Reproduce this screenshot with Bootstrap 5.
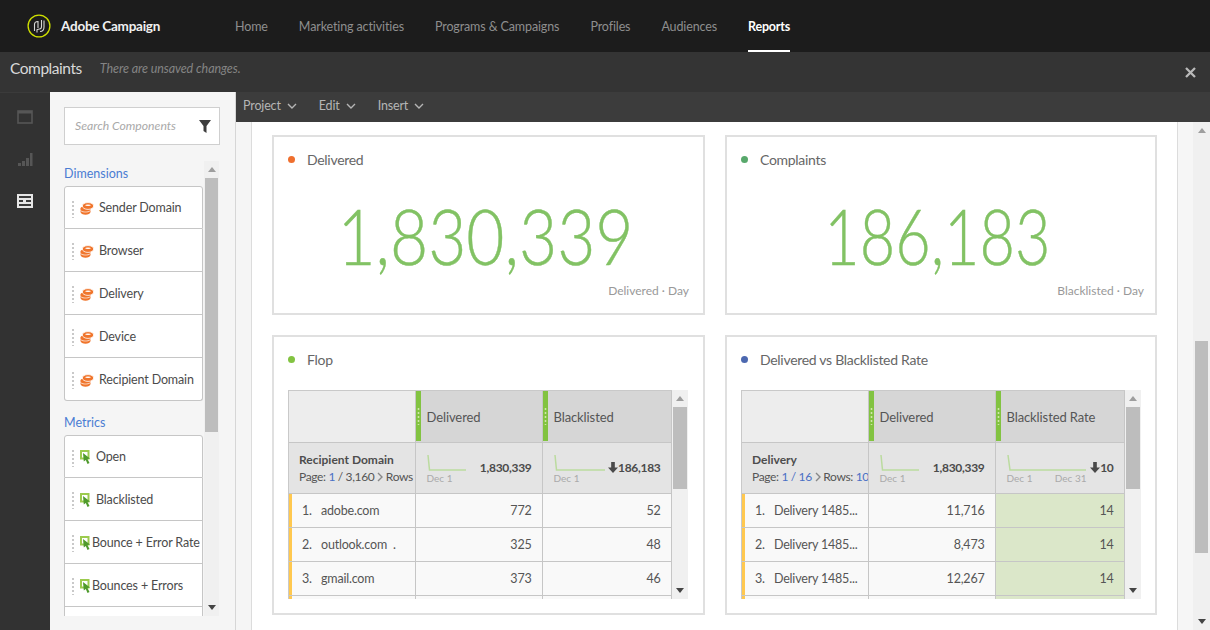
<!DOCTYPE html>
<html lang="en">
<head>
<meta charset="utf-8">
<title>Adobe Campaign - Complaints</title>
<link href="https://cdn.jsdelivr.net/npm/bootstrap@5.3.0/dist/css/bootstrap.min.css" rel="stylesheet">
<style>
html,body{height:630px;overflow:hidden}
body{font-family:Lato,"Liberation Sans",sans-serif;font-size:13px;color:#4b4b4b;background:#fff}
.app-shell{width:1210px;height:630px}
.top-bar{height:52px;background:#1c1c1c;padding:0}
.brand-box{width:235px;padding-left:27px;gap:10px;color:#f0f0f0;font-weight:700;font-size:13.5px;letter-spacing:-.25px}
.top-bar .nav-link{color:#8e8e8e;font-size:12.5px;letter-spacing:-.12px;padding:0;margin-right:31px;height:52px;line-height:53px;border-bottom:2px solid transparent}
.top-bar .nav-link.active{color:#fff;font-weight:700;border-bottom-color:#fff;margin-right:0;letter-spacing:-.2px}
.title-bar{height:40px;background:#343434;padding:0 13px 0 10px}
.title-main{font-size:15.5px;letter-spacing:-.45px;color:#d9d9d9;margin-right:18px;margin-bottom:6px}
.title-note{font-size:12.5px;font-style:italic;color:#848484;margin-bottom:6px;letter-spacing:-.08px}
.work-area{height:538px}
.rail{width:50px;background:#323232;padding-top:17px;gap:27px;border-top:1px solid #3b3b3b}
.side-panel{width:186px;background:#f5f5f5;border-right:1px solid #d6d6d6;padding:15px 0 0 14px}
.search-box{width:156px;height:38px;background:#fff;border:1px solid #cfcfcf;padding:0 8px 0 10px;font-size:12.2px;font-style:italic;color:#a9a9a9}
.panel-scroll{width:155px;height:455px;margin-top:16px;overflow:hidden}
.panel-lists{width:140px;height:455px;overflow:hidden}
.panel-head{color:#4a7cd3;font-size:12.5px;line-height:15px;padding:5px 0 5px}
.panel-head.second{padding-top:14px}
.comp-list{border-radius:3px;width:139px;--bs-list-group-border-color:#c6c6c6;--bs-list-group-border-radius:3px}
.comp-list .list-group-item{height:43px;padding:2px 0 0 7px;color:#4b4b4b;font-size:12.5px;letter-spacing:-.15px;white-space:nowrap;display:flex;align-items:center}
.grip-col{width:2px;height:18px;margin-right:6px;background:radial-gradient(circle,#c9c9c9 0.9px,transparent 1.1px) 0 0/2px 4px repeat-y}
.txt-gap{margin-left:5px}
.txt-tight{margin-left:1px}
.vscroll{width:15px;background:#f0f0f0;flex:none;padding:0 1px}
.thumb-a{height:254px;margin-top:17px;background:#bdbdbd}
.arrow-up,.arrow-dn{position:absolute;left:50%;margin-left:-4px;width:0;height:0;border-left:4px solid transparent;border-right:4px solid transparent}
.arrow-up{top:6px;border-bottom:5px solid #9e9e9e}
.arrow-dn{bottom:6px;border-top:5px solid #444}
.right-zone{background:#fff;min-width:0}
.tool-bar{height:30px;background:#3c3c3c;padding-left:7px;padding-bottom:2px;color:#b5b5b5;font-size:12.5px;letter-spacing:-.15px}
.tool-item{gap:6px;margin-right:22px}
.content-wrap{height:508px}
.gutter-a{width:16px;background:#f5f5f5;border-right:1px solid #dcdcdc}
.canvas-main{width:925px;padding:13px 20px 0 20px;background:#fff;overflow:hidden}
.gutter-b{width:16px;background:#f6f6f6;border-left:1px solid #dcdcdc}
.page-scroll{width:17px;background:#f0f0f0}
.thumb-b{position:absolute;left:2px;right:2px;top:219px;height:212px;background:#bdbdbd}
.dash-grid{display:grid;grid-template-columns:433px 432px;grid-template-rows:180px 280px;gap:20px}
.dash-card{border:2px solid #e0e0e0;border-radius:0;padding:0 14px 0 14px;overflow:hidden;--bs-card-bg:#fff}
.card-line{height:44px;padding-top:1px;font-size:14px;letter-spacing:-.3px;color:#666;gap:12px}
.dot-mark{width:7px;height:7px;border-radius:50%;flex:none}
.big-num{font-weight:300;font-size:76px;line-height:80px;color:#82c264;-webkit-text-stroke:.4px #82c264;text-align:center;margin-top:15px;padding-right:7px;transform:scaleX(.866)}
.big-num.num-short{padding-right:9px;transform:scaleX(.805)}
.big-sub{font-size:12px;color:#999;text-align:right;line-height:16px;margin-top:7px}
.sub-wide{margin-right:-3px}
.tbl-line{height:209px;margin-top:9px}
.tbl-clip{width:384px;height:209px;overflow:hidden;border-top:1px solid #c9c9c9;border-left:1px solid #c9c9c9}
.data-tbl{table-layout:fixed;width:382px;border-collapse:collapse;margin:0;font-size:12.5px;letter-spacing:-.2px}
.data-tbl td,.data-tbl th{padding:0;border:1px solid #c6c6c6;border-top:0;overflow:hidden}
.data-tbl td:first-child,.data-tbl th:first-child{border-left:0}
.row-h{height:51px}
.row-s{height:51px}
.row-d{height:34px}
.corner{background:#ededed}
.col-head{background:#d6d6d6;border-left:0!important;font-weight:400;padding-left:0!important}
.col-head>div{height:100%;align-items:center;gap:6px;font-size:13px;letter-spacing:-.1px;color:#555}
.col-head .head-txt{padding-top:2px}
.green-grip{width:5px;height:50px;background:#82c341;flex:none;display:flex;align-items:center;justify-content:center}
.green-grip::before{content:"";width:3px;height:18px;background:radial-gradient(circle,#cfe7a8 .9px,transparent 1.2px) 0 0/3px 4px repeat-y}
.sum-row td{background:#e4e4e4}
.sum-left{padding:0 0 0 10px!important;line-height:17px;font-size:12px;white-space:nowrap;color:#555;letter-spacing:-.35px}
.sum-left b{color:#4d4d4d;display:block;letter-spacing:0}
.blue-t{color:#4a6fc4}
.sum-val{padding:0 10px 0 11px!important;font-weight:700;font-size:12px;letter-spacing:-.3px;color:#4b4b4b}
.spark-lab{font-size:10px;color:#aaa;line-height:10px;font-weight:400;letter-spacing:0}
.data-row td{background:#f9f9f9;color:#555;padding-top:2px}
.data-row td.lab-cell{box-shadow:inset 3px 0 0 #ffc84f;padding-left:13px;white-space:nowrap}
.rank-t{display:inline-block;width:19px}
.data-row td.num-cell{text-align:right;padding-right:10px}
.data-row td.heat{background:#dbe7c9}
.tbl-bar{width:16px;height:209px;background:#f0f0f0;margin-left:0;padding:0 1px}
.thumb-c{height:82px;margin-top:17px;background:#bdbdbd}
</style>
</head>
<body>
<svg width="0" height="0" class="position-absolute">
  <symbol id="ico-stack" viewBox="0 0 14 13">
    <path d="M.5 6.500C.5 5 3 4 5.500 4S10.500 5 10.500 6.500V10C10.500 11.600 8 12.800 5.500 12.800S.5 11.600 .5 10Z" fill="#f0752c"/>
    <path d="M.5 8.500C2 9.900 4 10 5.500 10S9 9.900 10.500 8.500" fill="none" stroke="#fff" stroke-width=".7"/>
    <ellipse cx="8" cy="4" rx="5.700" ry="3.400" fill="#f0752c" stroke="#fff" stroke-width=".8"/>
    <ellipse cx="8" cy="3.300" rx="2.800" ry=".8" fill="#fff"/>
  </symbol>
  <symbol id="ico-metric" viewBox="0 0 11 15">
    <path d="M0 0H9.500V9.500H0Z M2 2V7.500H7.500V2Z" fill-rule="evenodd" fill="#9ccb4e"/>
    <path d="M3 3L10 8.500 7.500 9 9.500 13 7.500 14 5.800 10 3.800 11.500Z" fill="#4f9a2c"/>
  </symbol>
  <symbol id="ico-chev" viewBox="0 0 10 6">
    <path d="M1 1L5 5 9 1" fill="none" stroke="#b5b5b5" stroke-width="1.400"/>
  </symbol>
  <symbol id="ico-down" viewBox="0 0 11 12">
    <path d="M3.500 0H7.500V6H11L5.500 12 0 6H3.500Z" fill="#4a4a4a"/>
  </symbol>
  <symbol id="ico-next" viewBox="0 0 6 10">
    <path d="M1 1L5 5 1 9" fill="none" stroke="#888" stroke-width="1.400"/>
  </symbol>
</svg>

<div class="app-shell d-flex flex-column">
  <nav class="navbar top-bar flex-nowrap">
    <div class="brand-box d-flex align-items-center">
      <svg width="24" height="24" viewBox="0 0 24 24" aria-hidden="true">
        <circle cx="12" cy="12" r="10.900" fill="none" stroke="#cfe000" stroke-width="1.300"/>
        <path d="M7.500 17V10.500C7.500 8.500 9 7.500 11 7.500V14M10 18.500V16C10 15 11 15 12.500 15 14 15 14.500 14 14.500 12.500V6M17 6.500V13C17 16 15.500 17.500 13 17.500" fill="none" stroke="#d8d8d8" stroke-width="1.100"/>
      </svg>
      <span>Adobe Campaign</span>
    </div>
    <ul class="nav flex-grow-1 flex-nowrap">
      <li class="nav-item"><a class="nav-link" href="#">Home</a></li>
      <li class="nav-item"><a class="nav-link" href="#">Marketing activities</a></li>
      <li class="nav-item"><a class="nav-link" href="#">Programs &amp; Campaigns</a></li>
      <li class="nav-item"><a class="nav-link" href="#">Profiles</a></li>
      <li class="nav-item"><a class="nav-link" href="#">Audiences</a></li>
      <li class="nav-item"><a class="nav-link active" href="#">Reports</a></li>
    </ul>
  </nav>

  <div class="title-bar d-flex align-items-center">
    <span class="title-main">Complaints</span>
    <span class="title-note">There are unsaved changes.</span>
    <svg class="ms-auto" width="13" height="13" viewBox="0 0 13 13" aria-label="Close"><path d="M2 2L11 11M11 2L2 11" stroke="#b9b9b9" stroke-width="2.300"/></svg>
  </div>

  <div class="work-area d-flex">
    <div class="rail d-flex flex-column align-items-center">
      <svg width="16" height="14" viewBox="0 0 16 14"><rect x="1" y="1" width="14" height="12" fill="none" stroke="#565656" stroke-width="1.600"/><rect x="1" y="1" width="14" height="2.500" fill="#565656"/></svg>
      <svg width="16" height="16" viewBox="0 0 16 16"><path d="M1 12h3v3H1zM5 10h3v5H5zM9 7h3v8H9zM13 2h2.500v13H13z" fill="#565656"/></svg>
      <svg width="16" height="14" viewBox="0 0 16 14"><rect width="16" height="14" fill="#e6e6e6"/><path d="M2 2h12v2H2zM2 6h4v2H2zM9 6h5v2H9zM2 10h12v2H2z" fill="#3a3a3a"/></svg>
    </div>

    <aside class="side-panel">
      <div class="search-box d-flex align-items-center justify-content-between">
        <span>Search Components</span>
        <svg width="12" height="13" viewBox="0 0 12 13"><path d="M0 0H12L7.500 6V13L4.500 11V6Z" fill="#3d3d3d"/></svg>
      </div>
      <div class="panel-scroll d-flex">
        <div class="panel-lists">
          <div class="panel-head">Dimensions</div>
          <ul class="list-group comp-list">
            <li class="list-group-item"><i class="grip-col"></i><svg width="14" height="13"><use href="#ico-stack"/></svg><span class="txt-gap">Sender Domain</span></li>
            <li class="list-group-item"><i class="grip-col"></i><svg width="14" height="13"><use href="#ico-stack"/></svg><span class="txt-gap">Browser</span></li>
            <li class="list-group-item"><i class="grip-col"></i><svg width="14" height="13"><use href="#ico-stack"/></svg><span class="txt-gap">Delivery</span></li>
            <li class="list-group-item"><i class="grip-col"></i><svg width="14" height="13"><use href="#ico-stack"/></svg><span class="txt-gap">Device</span></li>
            <li class="list-group-item"><i class="grip-col"></i><svg width="14" height="13"><use href="#ico-stack"/></svg><span class="txt-gap">Recipient Domain</span></li>
          </ul>
          <div class="panel-head second">Metrics</div>
          <ul class="list-group comp-list">
            <li class="list-group-item"><i class="grip-col"></i><svg width="11" height="15"><use href="#ico-metric"/></svg><span class="txt-gap">Open</span></li>
            <li class="list-group-item"><i class="grip-col"></i><svg width="11" height="15"><use href="#ico-metric"/></svg><span class="txt-gap">Blacklisted</span></li>
            <li class="list-group-item"><i class="grip-col"></i><svg width="11" height="15"><use href="#ico-metric"/></svg><span class="txt-tight">Bounce + Error Rate</span></li>
            <li class="list-group-item"><i class="grip-col"></i><svg width="11" height="15"><use href="#ico-metric"/></svg><span class="txt-tight">Bounces + Errors</span></li>
            <li class="list-group-item"></li>
          </ul>
        </div>
        <div class="vscroll position-relative">
          <i class="arrow-up"></i>
          <div class="thumb-a"></div>
          <i class="arrow-dn"></i>
        </div>
      </div>
    </aside>

    <div class="right-zone flex-grow-1 d-flex flex-column">
      <div class="tool-bar d-flex align-items-center">
        <span class="tool-item d-flex align-items-center">Project <svg width="10" height="6"><use href="#ico-chev"/></svg></span>
        <span class="tool-item d-flex align-items-center">Edit <svg width="10" height="6"><use href="#ico-chev"/></svg></span>
        <span class="tool-item d-flex align-items-center">Insert <svg width="10" height="6"><use href="#ico-chev"/></svg></span>
      </div>
      <div class="content-wrap d-flex">
        <div class="gutter-a"></div>
        <div class="canvas-main">
          <div class="dash-grid">
            <section class="card dash-card">
              <div class="card-line d-flex align-items-center"><i class="dot-mark" style="background:#ef6f2e"></i>Delivered</div>
              <div class="big-num">1,830,339</div>
              <div class="big-sub">Delivered · Day</div>
            </section>
            <section class="card dash-card">
              <div class="card-line d-flex align-items-center"><i class="dot-mark" style="background:#58a86b"></i>Complaints</div>
              <div class="big-num num-short">186,183</div>
              <div class="big-sub sub-wide">Blacklisted · Day</div>
            </section>
            <section class="card dash-card">
              <div class="card-line d-flex align-items-center"><i class="dot-mark" style="background:#82c341"></i>Flop</div>
              <div class="tbl-line d-flex">
                <div class="tbl-clip">
                  <table class="data-tbl">
                    <colgroup><col style="width:126px"><col style="width:127px"><col style="width:129px"></colgroup>
                    <tr class="row-h"><th class="corner"></th><th class="col-head"><div class="d-flex"><i class="green-grip"></i><span class="head-txt">Delivered</span></div></th><th class="col-head"><div class="d-flex"><i class="green-grip"></i><span class="head-txt">Blacklisted</span></div></th></tr>
                    <tr class="row-s sum-row">
                      <td class="sum-left"><b>Recipient Domain</b>Page: <span class="blue-t">1</span> / 3,160 <svg width="6" height="10"><use href="#ico-next"/></svg> Rows</td>
                      <td class="sum-val"><div class="d-flex justify-content-between align-items-center"><div><svg class="d-block" width="40" height="20"><path d="M1 2L2.500 17H39" fill="none" stroke="#bbdb9f" stroke-width="1.500"/></svg><div class="spark-lab">Dec 1</div></div><span>1,830,339</span></div></td>
                      <td class="sum-val"><div class="d-flex justify-content-between align-items-center"><div><svg class="d-block" width="52" height="20"><path d="M1 2L2.500 17H51" fill="none" stroke="#bbdb9f" stroke-width="1.500"/></svg><div class="spark-lab">Dec 1</div></div><span class="d-flex align-items-center"><svg width="10" height="11"><use href="#ico-down"/></svg>186,183</span></div></td>
                    </tr>
                    <tr class="row-d data-row"><td class="lab-cell"><span class="rank-t">1.</span>adobe.com</td><td class="num-cell">772</td><td class="num-cell">52</td></tr>
                    <tr class="row-d data-row"><td class="lab-cell"><span class="rank-t">2.</span>outlook.com &nbsp;.</td><td class="num-cell">325</td><td class="num-cell">48</td></tr>
                    <tr class="row-d data-row"><td class="lab-cell"><span class="rank-t">3.</span>gmail.com</td><td class="num-cell">373</td><td class="num-cell">46</td></tr>
                    <tr class="row-d data-row"><td class="lab-cell"></td><td class="num-cell"></td><td class="num-cell"></td></tr>
                  </table>
                </div>
                <div class="tbl-bar position-relative"><i class="arrow-up"></i><div class="thumb-c"></div><i class="arrow-dn"></i></div>
              </div>
            </section>
            <section class="card dash-card">
              <div class="card-line d-flex align-items-center"><i class="dot-mark" style="background:#4c68b0"></i>Delivered vs Blacklisted Rate</div>
              <div class="tbl-line d-flex">
                <div class="tbl-clip">
                  <table class="data-tbl">
                    <colgroup><col style="width:126px"><col style="width:127px"><col style="width:129px"></colgroup>
                    <tr class="row-h"><th class="corner"></th><th class="col-head"><div class="d-flex"><i class="green-grip"></i><span class="head-txt">Delivered</span></div></th><th class="col-head"><div class="d-flex"><i class="green-grip"></i><span class="head-txt">Blacklisted Rate</span></div></th></tr>
                    <tr class="row-s sum-row">
                      <td class="sum-left"><b>Delivery</b>Page: <span class="blue-t">1 / 16</span> <svg width="6" height="10"><use href="#ico-next"/></svg> Rows: <span class="blue-t">10</span></td>
                      <td class="sum-val"><div class="d-flex justify-content-between align-items-center"><div><svg class="d-block" width="40" height="20"><path d="M1 2L2.500 17H39" fill="none" stroke="#bbdb9f" stroke-width="1.500"/></svg><div class="spark-lab">Dec 1</div></div><span>1,830,339</span></div></td>
                      <td class="sum-val"><div class="d-flex justify-content-between align-items-center"><div><svg class="d-block" width="80" height="20"><path d="M1 2L3 17H79" fill="none" stroke="#bbdb9f" stroke-width="1.500"/></svg><div class="spark-lab d-flex justify-content-between"><span>Dec 1</span><span>Dec 31</span></div></div><span class="d-flex align-items-center"><svg width="10" height="11"><use href="#ico-down"/></svg>10</span></div></td>
                    </tr>
                    <tr class="row-d data-row"><td class="lab-cell"><span class="rank-t">1.</span>Delivery 1485...</td><td class="num-cell">11,716</td><td class="num-cell heat">14</td></tr>
                    <tr class="row-d data-row"><td class="lab-cell"><span class="rank-t">2.</span>Delivery 1485...</td><td class="num-cell">8,473</td><td class="num-cell heat">14</td></tr>
                    <tr class="row-d data-row"><td class="lab-cell"><span class="rank-t">3.</span>Delivery 1485...</td><td class="num-cell">12,267</td><td class="num-cell heat">14</td></tr>
                    <tr class="row-d data-row"><td class="lab-cell"></td><td class="num-cell"></td><td class="num-cell heat"></td></tr>
                  </table>
                </div>
                <div class="tbl-bar position-relative"><i class="arrow-up"></i><div class="thumb-c"></div><i class="arrow-dn"></i></div>
              </div>
            </section>
          </div>
        </div>
        <div class="gutter-b"></div>
        <div class="page-scroll position-relative"><i class="arrow-up"></i><div class="thumb-b"></div><i class="arrow-dn"></i></div>
      </div>
    </div>
  </div>
</div>
</body>
</html>
